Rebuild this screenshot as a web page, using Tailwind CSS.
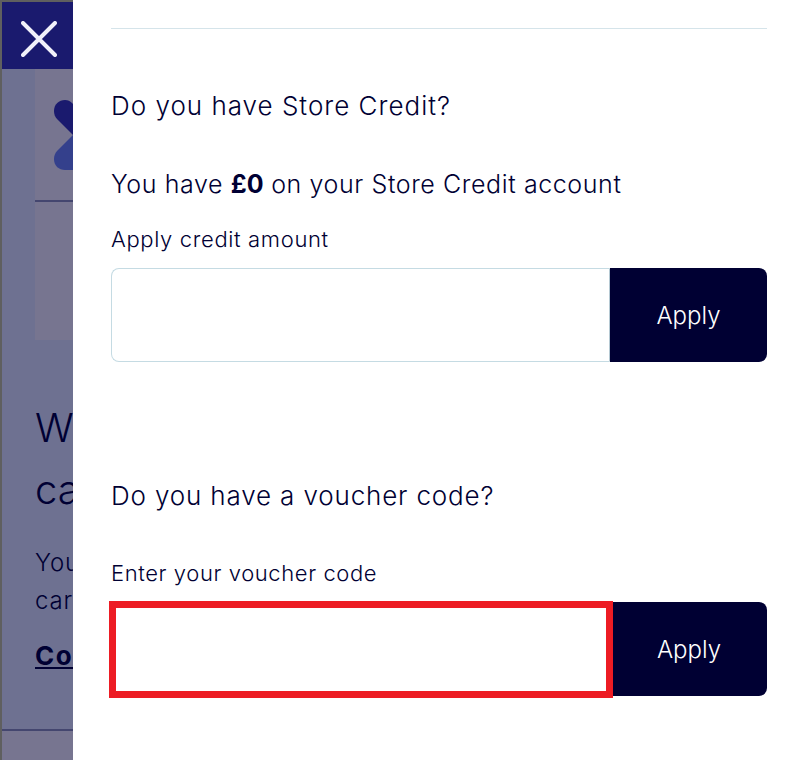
<!DOCTYPE html>
<html lang="en">
<head>
    <meta charset="UTF-8">
    <title>Store Credit and voucher</title>
    <script src="https://cdn.jsdelivr.net/npm/@tailwindcss/browser@4"></script>
</head>
<body class="bg-white">
    <div class="flex w-[804px] h-[760px] overflow-hidden font-['Inter',sans-serif] font-light text-[#000033]">
        <!-- Page behind the drawer -->
        <div class="w-[73px] h-full shrink-0 border-l-2 border-[#5f5f5f] bg-[#6e7191] overflow-hidden">
            <div class="h-[2px] bg-[#5f5f5f]"></div>
            <button class="flex items-center justify-center w-full h-[67px] pt-[6px] pl-[2px] bg-[#1a1a6e]">
                <svg width="36" height="36" viewBox="0 0 36 36" fill="none" stroke="#f1f1fa" stroke-width="4" stroke-linecap="round"><path d="M2 2 34 34M34 2 2 34"/></svg>
            </button>
            <div class="ml-[33px] h-[271px] bg-[#777590]">
                <div class="h-[133px] border-b-2 border-[#44466f] pt-[31px] pl-[19px] overflow-hidden">
                    <svg width="19" height="70" viewBox="0 0 19 70" class="block">
                        <path d="M0 11C0 4 5 0 11 0c3 0 5 1 7 3l1 1v31L3 19C1 17 0 14 0 11Z" fill="#1a1a6e"/>
                        <path d="M0 59c0 7 5 11 11 11h8V35L3 51c-2 2-3 5-3 8Z" fill="#34408c"/>
                    </svg>
                </div>
            </div>
            <div class="ml-[33px] w-[100px] pt-[57px]">
                <p class="text-[40px] leading-[62px] whitespace-nowrap">We</p>
                <p class="text-[40px] leading-[62px] whitespace-nowrap">ca</p>
                <p class="mt-[23px] text-[24px] leading-[38px] tracking-[0.8px] whitespace-nowrap">You</p>
                <p class="text-[24px] leading-[38px] tracking-[0.8px] whitespace-nowrap">car</p>
                <p class="mt-[17px] text-[26px] leading-[38px] tracking-[1.5px] font-bold underline whitespace-nowrap">Con</p>
            </div>
            <div class="mt-[54px] h-[32px] border-t-2 border-[#44466f] bg-[#777590]"></div>
        </div>

        <!-- Drawer -->
        <div class="flex-1 bg-white pl-[38px] pr-[37px] pt-[28px]">
            <div class="border-t border-[#d5e4ea]"></div>

            <h2 class="mt-[59px] text-[26px] leading-[36px] tracking-[1px] font-light">Do you have Store Credit?</h2>
            <p class="mt-[42px] text-[25px] leading-[36px] tracking-[0.6px]">You have <strong class="font-bold tracking-[0px]">£0</strong> on your Store Credit account</p>
            <label class="block mt-[22px] text-[22px] leading-[30px] tracking-[0.65px]">Apply credit amount</label>
            <div class="flex mt-[14px] h-[94px]">
                <input type="text" class="flex-1 min-w-0 bg-white border border-[#c5dbe3] border-r-[#b5c9d3] rounded-l-lg">
                <button class="w-[157px] pt-[2px] bg-[#000033] text-white text-[24px] font-light rounded-r-lg">Apply</button>
            </div>

            <h2 class="mt-[116px] text-[26px] leading-[36px] tracking-[0.85px] font-light">Do you have a voucher code?</h2>
            <label class="block mt-[44px] text-[22px] leading-[30px] tracking-[0.6px]">Enter your voucher code</label>
            <div class="flex mt-[14px] h-[94px]">
                <input type="text" class="flex-1 min-w-0 -ml-[2px] -mt-[1px] -mb-[2px] bg-white border-[7px] border-[#ed1c24]">
                <button class="w-[154px] pt-[2px] pr-[2px] bg-[#000033] text-white text-[24px] font-light rounded-r-lg">Apply</button>
            </div>
        </div>
    </div>
</body>
</html>
